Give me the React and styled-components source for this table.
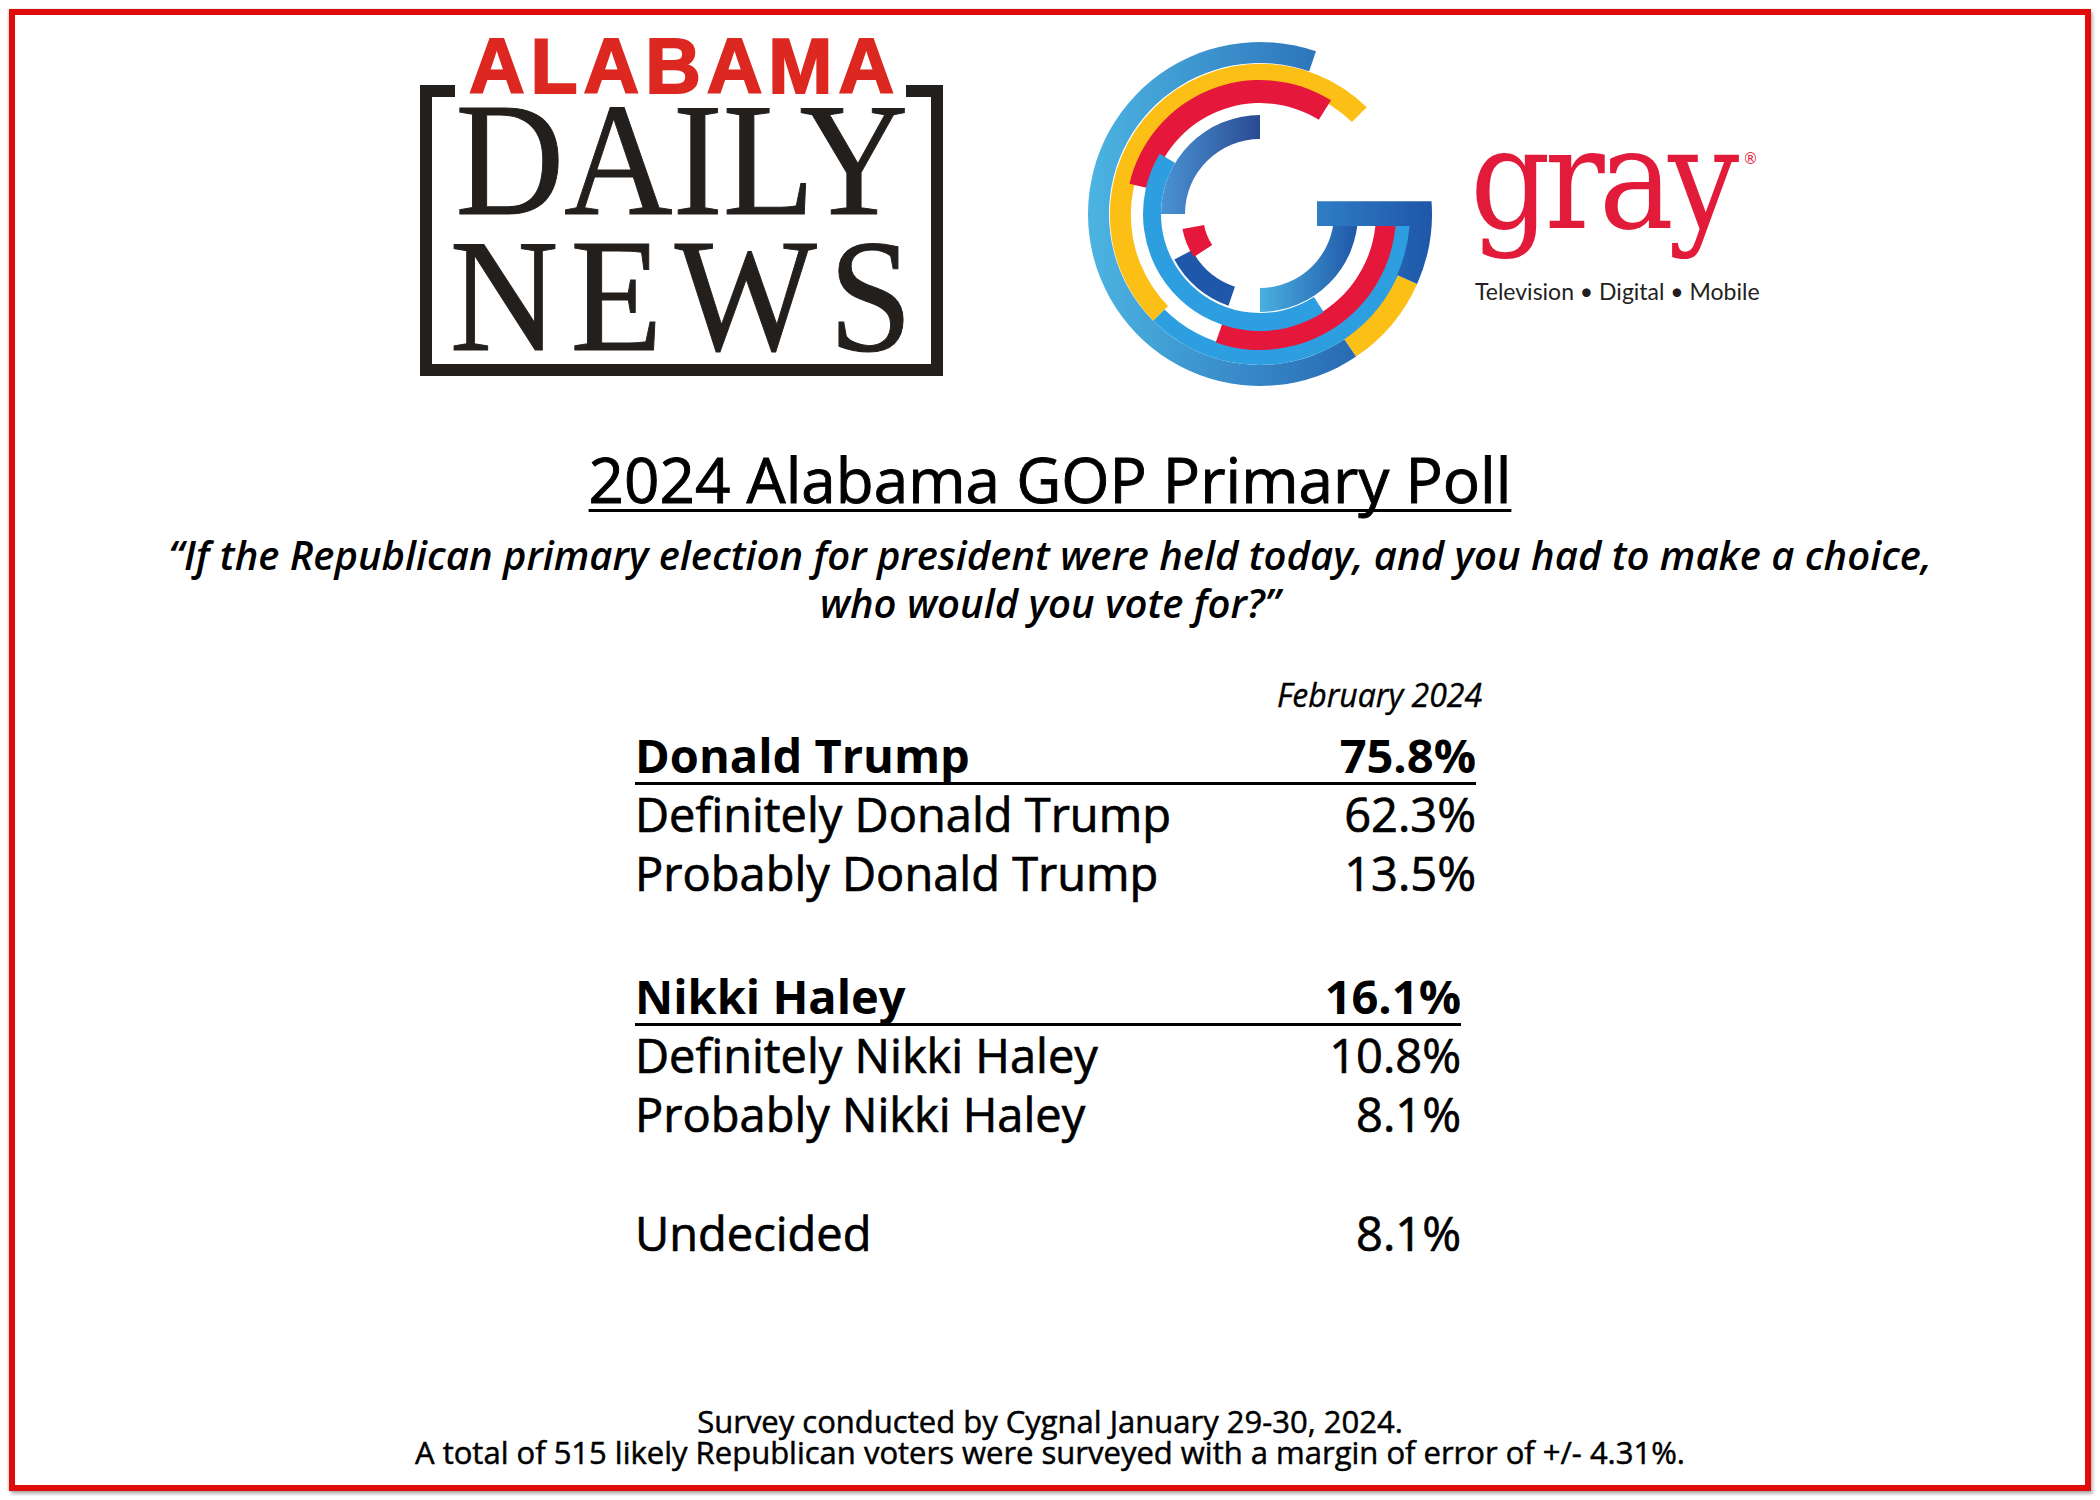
import React from "react";
import styled, { createGlobalStyle } from "styled-components";

const GlobalStyle = createGlobalStyle`
  html, body { margin: 0; padding: 0; background: #ffffff; }
  body { font-family: "Open Sans", "Noto Sans", sans-serif; font-weight: 400; color: #000; }
`;

const Page = styled.div`
  width: 2100px;
  height: 1500px;
  padding: 9px;
  box-sizing: border-box;
`;

const Frame = styled.div`
  box-sizing: border-box;
  height: 100%;
  border: 6px solid #e00b0b;
  box-shadow: 2px 3px 3px rgba(0, 0, 0, 0.28), -1px 0 2px rgba(0, 0, 0, 0.18);
  display: flex;
  flex-direction: column;
`;

const Header = styled.header`
  display: flex;
  align-items: flex-start;
  padding-left: 405px;
  height: 374px;
`;

/* ---------- Alabama Daily News logo ---------- */
const AdnLogo = styled.div`
  display: flex;
  flex-direction: column;
  align-items: center;
  width: 523px;
  margin-top: 21px;
`;

const AdnAlabama = styled.div`
  font-family: "Liberation Sans", Arial, sans-serif;
  font-weight: 700;
  font-size: 77px;
  line-height: 60px;
  height: 60px;
  color: #dc2820;
  -webkit-text-stroke: 2px #dc2820;
  letter-spacing: 6px;
  padding-left: 6px;
  margin-bottom: -11px;
`;

const AdnBox = styled.div`
  box-sizing: border-box;
  width: 523px;
  height: 291px;
  border: 12px solid #231f1c;
  border-top: 0;
  padding-top: 7px;
  background:
    linear-gradient(#231f1c, #231f1c) left top / 35px 12px no-repeat,
    linear-gradient(#231f1c, #231f1c) right top / 37px 12px no-repeat;
  background-origin: border-box;
  display: flex;
  flex-direction: column;
  align-items: center;
`;

const AdnLine = styled.div`
  font-family: "Liberation Serif", "Times New Roman", serif;
  font-weight: 400;
  font-size: 160px;
  line-height: 136px;
  height: 136px;
  color: #231f1c;
  white-space: nowrap;
`;

const AdnWord = styled.span`
  display: inline-block;
  transform: scaleX(${(p) => p.$sx});
  transform-origin: center;
  letter-spacing: ${(p) => p.$ls}px;
  padding-left: ${(p) => p.$ls}px;
  -webkit-text-stroke: 1px #231f1c;
`;

/* ---------- Gray logo ---------- */
const GMark = styled.svg`
  display: block;
  width: 350px;
  height: 350px;
  margin-left: 142px;
  margin-top: 24px;
  flex: none;
`;

const GrayBrand = styled.div`
  display: flex;
  flex-direction: column;
  margin-left: 35px;
  margin-top: 95px;
`;

const GrayWord = styled.div`
  font-family: "DejaVu Serif", "Liberation Serif", serif;
  font-stretch: condensed;
  font-weight: 400;
  font-size: 140px;
  line-height: 140px;
  height: 140px;
  color: #e31b3b;
  letter-spacing: -6px;
  white-space: nowrap;
`;

const RegMark = styled.span`
  font-family: "DejaVu Sans", sans-serif;
  font-stretch: normal;
  font-size: 15px;
  letter-spacing: 0;
  vertical-align: 64px;
  line-height: 0;
  margin-left: 10px;
`;

const Tagline = styled.div`
  font-family: Lato, "Open Sans", sans-serif;
  font-weight: 400;
  font-size: 23px;
  line-height: 30px;
  color: #231f20;
  margin-top: 26px;
  padding-left: 5px;
  white-space: nowrap;
`;

/* ---------- Title block ---------- */
const Title = styled.h1`
  margin: 55px 0 0;
  font-size: 62px;
  font-weight: 400;
  line-height: 70px;
  text-align: center;
  -webkit-text-stroke: 0.9px #000;
  text-decoration: underline;
  text-decoration-thickness: 3px;
  text-underline-offset: 6px;
  text-decoration-skip-ink: none;
`;

const Question = styled.p`
  margin: 17px 0 0;
  font-size: 40px;
  font-weight: 600;
  font-style: italic;
  line-height: 48px;
  text-align: center;
`;

/* ---------- Results table ---------- */
const Table = styled.section`
  margin: 48px 0 0 620px;
  width: 841px;
  display: flex;
  flex-direction: column;
`;

const DateLabel = styled.div`
  font-size: 32px;
  font-style: italic;
  line-height: 40px;
  text-align: right;
  margin-right: -6px;
  -webkit-text-stroke: 0.4px #000;
`;

const Block = styled.div`
  width: ${(p) => p.$w}px;
  margin-top: ${(p) => p.$mt}px;
`;

const HeadRow = styled.div`
  display: flex;
  justify-content: space-between;
  font-size: 47px;
  font-weight: 700;
  line-height: 54px;
  border-bottom: 3px solid #000;
`;

const Row = styled.div`
  display: flex;
  justify-content: space-between;
  font-size: 47px;
  line-height: 59px;
  -webkit-text-stroke: 0.7px #000;
`;

const Footer = styled.footer`
  margin-top: auto;
  padding-bottom: 17px;
  font-size: 31px;
  line-height: 31px;
  text-align: center;
  -webkit-text-stroke: 0.5px #000;
`;

/* ---------- G mark geometry ---------- */
const C = 175;
const f = (n) => n.toFixed(2);
const pt = (r, a) => {
  const t = (a * Math.PI) / 180;
  return [C + r * Math.cos(t), C + r * Math.sin(t)];
};
const sector = (r1, r2, a1, a2) => {
  const [x1, y1] = pt(r2, a1);
  const [x2, y2] = pt(r2, a2);
  const [x3, y3] = pt(r1, a2);
  const [x4, y4] = pt(r1, a1);
  const large = a2 - a1 > 180 ? 1 : 0;
  return `M${f(x1)} ${f(y1)}A${r2} ${r2} 0 ${large} 1 ${f(x2)} ${f(y2)}L${f(x3)} ${f(y3)}A${r1} ${r1} 0 ${large} 0 ${f(x4)} ${f(y4)}Z`;
};
const barPath = (() => {
  const top = -12.7;
  const bot = 12;
  const xo = Math.sqrt(172 * 172 - top * top);
  const [ax, ay] = pt(172, 24);
  const [bx, by] = pt(150, 24);
  const xi = Math.sqrt(150 * 150 - bot * bot);
  return `M${C + 57} ${f(C + top)}L${f(C + xo)} ${f(C + top)}A172 172 0 0 1 ${f(ax)} ${f(ay)}L${f(bx)} ${f(by)}A150 150 0 0 0 ${f(C + xi)} ${f(C + bot)}L${C + 57} ${f(C + bot)}Z`;
})();

const GrayMark = () => (
  <GMark viewBox="0 0 350 350">
    <defs>
      <linearGradient id="gOuter" gradientUnits="userSpaceOnUse" x1="3" y1="0" x2="347" y2="0">
        <stop offset="0" stopColor="#4cb4e2" />
        <stop offset="1" stopColor="#1e55a6" />
      </linearGradient>
      <linearGradient id="gBar" gradientUnits="userSpaceOnUse" x1="232" y1="0" x2="348" y2="0">
        <stop offset="0" stopColor="#2f7dc5" />
        <stop offset="1" stopColor="#1f56a8" />
      </linearGradient>
      <linearGradient id="gTopIn" gradientUnits="userSpaceOnUse" x1="76" y1="0" x2="175" y2="0">
        <stop offset="0" stopColor="#4a93d3" />
        <stop offset="1" stopColor="#2a4a92" />
      </linearGradient>
      <linearGradient id="gBotIn" gradientUnits="userSpaceOnUse" x1="175" y1="0" x2="273" y2="0">
        <stop offset="0" stopColor="#4ab0df" />
        <stop offset="1" stopColor="#1f56a8" />
      </linearGradient>
    </defs>
    <path d={sector(151, 172, 56, 289)} fill="url(#gOuter)" />
    <path d={sector(130, 151, 135, 315)} fill="#fbbf16" />
    <path d={sector(150, 172, 24, 56)} fill="#fbbf16" />
    <path d={sector(135, 151, 0, 135)} fill="#2d9fe0" />
    <path d={sector(111, 134, 193, 302)} fill="#e5173a" />
    <path d={sector(116, 136, 0, 109)} fill="#e5173a" />
    <path d={sector(99, 117, 57, 211)} fill="#2d9fe0" />
    <path d={sector(75, 99, 180, 270)} fill="url(#gTopIn)" />
    <path d={sector(74, 98, 0, 90)} fill="url(#gBotIn)" />
    <path d={sector(77, 97, 109, 152)} fill="#1f57ab" />
    <path d={sector(57, 79, 147, 169)} fill="#e5173a" />
    <path d={barPath} fill="url(#gBar)" />
  </GMark>
);

const results = [
  {
    head: ["Donald Trump", "75.8%"],
    rows: [
      ["Definitely Donald Trump", "62.3%"],
      ["Probably Donald Trump", "13.5%"],
    ],
    w: 841,
    mt: 13,
  },
  {
    head: ["Nikki Haley", "16.1%"],
    rows: [
      ["Definitely Nikki Haley", "10.8%"],
      ["Probably Nikki Haley", "8.1%"],
    ],
    w: 826,
    mt: 66,
  },
];

export default function App() {
  return (
    <>
      <GlobalStyle />
      <Page>
        <Frame>
          <Header>
            <AdnLogo>
              <AdnAlabama>ALABAMA</AdnAlabama>
              <AdnBox>
                <AdnLine>
                  <AdnWord $ls={0} $sx={0.94}>DAILY</AdnWord>
                </AdnLine>
                <AdnLine>
                  <AdnWord $ls={13} $sx={0.94}>NEWS</AdnWord>
                </AdnLine>
              </AdnBox>
            </AdnLogo>
            <GrayMark />
            <GrayBrand>
              <GrayWord>
                gray<RegMark>®</RegMark>
              </GrayWord>
              <Tagline>Television • Digital • Mobile</Tagline>
            </GrayBrand>
          </Header>

          <Title>2024 Alabama GOP Primary Poll</Title>
          <Question>
            “If the Republican primary election for president were held today, and you had to make a choice,
            <br />
            who would you vote for?”
          </Question>

          <Table>
            <DateLabel>February 2024</DateLabel>
            {results.map((b) => (
              <Block key={b.head[0]} $w={b.w} $mt={b.mt}>
                <HeadRow>
                  <span>{b.head[0]}</span>
                  <span>{b.head[1]}</span>
                </HeadRow>
                {b.rows.map((r) => (
                  <Row key={r[0]}>
                    <span>{r[0]}</span>
                    <span>{r[1]}</span>
                  </Row>
                ))}
              </Block>
            ))}
            <Block $w={826} $mt={60}>
              <Row>
                <span>Undecided</span>
                <span>8.1%</span>
              </Row>
            </Block>
          </Table>

          <Footer>
            Survey conducted by Cygnal January 29-30, 2024.
            <br />
            A total of 515 likely Republican voters were surveyed with a margin of error of +/- 4.31%.
          </Footer>
        </Frame>
      </Page>
    </>
  );
}
